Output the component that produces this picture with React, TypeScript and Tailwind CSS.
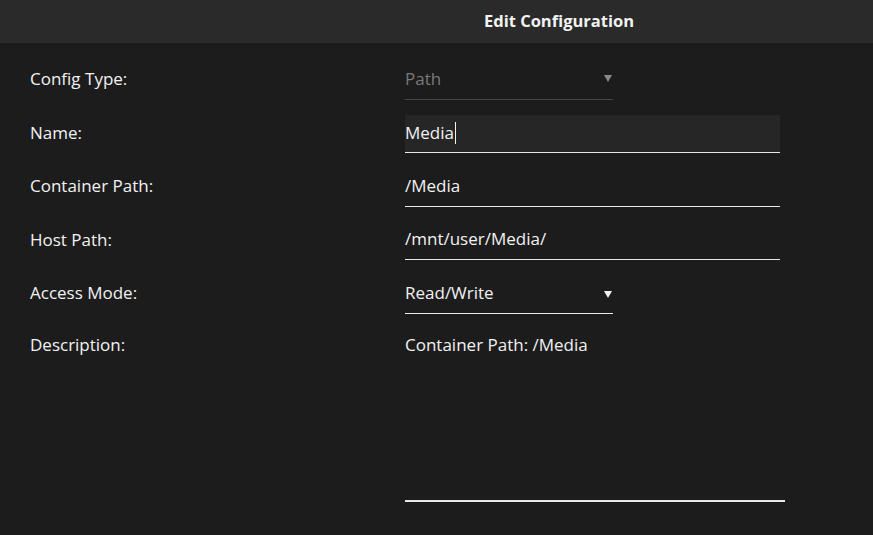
import React from 'react';

const font = { fontFamily: '"Open Sans", "Noto Sans", sans-serif' };

interface RowProps {
  label: string;
  children: React.ReactNode;
}

const Row: React.FC<RowProps> = ({ label, children }) => (
  <div className="flex items-center h-[38px]">
    <div className="w-[375px] shrink-0 pb-[3px] text-[17px] text-[#f2f2f2]">{label}</div>
    {children}
  </div>
);

const Arrow: React.FC<{ dim?: boolean }> = ({ dim }) => (
  <svg width="8" height="7" viewBox="0 0 8 7" className="mr-[1px]">
    <polygon points="0,0 8,0 4,7" fill={dim ? '#8a8a8a' : '#f2f2f2'} />
  </svg>
);

export default function App() {
  return (
    <div className="w-[873px] h-[535px] bg-[#1c1c1c] overflow-hidden" style={font}>
      {/* Header */}
      <div className="h-[43px] bg-[#2a2a2a] flex items-center justify-center pl-[245px]">
        <span className="text-[16.5px] font-bold text-[#f2f2f2]">Edit Configuration</span>
      </div>

      {/* Form */}
      <div className="pl-[30px] pt-[18.5px] flex flex-col gap-y-[15.5px]">
        <Row label="Config Type:">
          <div className="w-[208px] h-full flex items-center justify-between pb-[3px] border-b border-[#454545] text-[17px] text-[#7a7a7a]">
            <span>Path</span>
            <Arrow dim />
          </div>
        </Row>

        <Row label="Name:">
          <div className="w-[375px] h-full flex items-center pb-[2px] bg-[#262626] border-b border-[#e8e8e8] text-[17px] text-[#f2f2f2]">
            <span>Media</span>
            <span className="w-[1px] h-[22px] bg-[#f2f2f2] ml-[1px]" />
          </div>
        </Row>

        <Row label="Container Path:">
          <div className="w-[375px] h-full flex items-center pb-[3px] border-b border-[#e8e8e8] text-[17px] text-[#f2f2f2]">
            /Media
          </div>
        </Row>

        <Row label="Host Path:">
          <div className="w-[375px] h-full flex items-center pb-[3px] border-b border-[#e8e8e8] text-[17px] text-[#f2f2f2]">
            /mnt/user/Media/
          </div>
        </Row>

        <Row label="Access Mode:">
          <div className="w-[208px] h-full flex items-center justify-between border-b border-[#e8e8e8] text-[17px] text-[#f2f2f2]">
            <span className="pb-[3px]">Read/Write</span>
            <Arrow />
          </div>
        </Row>

        <div className="flex items-start">
          <div className="w-[375px] shrink-0 text-[17px] text-[#f2f2f2] pt-[3px]">Description:</div>
          <div className="w-[380px] h-[173px] border-b-2 border-[#e8e8e8] text-[17px] text-[#f2f2f2] pt-[3px]">
            Container Path: /Media
          </div>
        </div>
      </div>
    </div>
  );
}
